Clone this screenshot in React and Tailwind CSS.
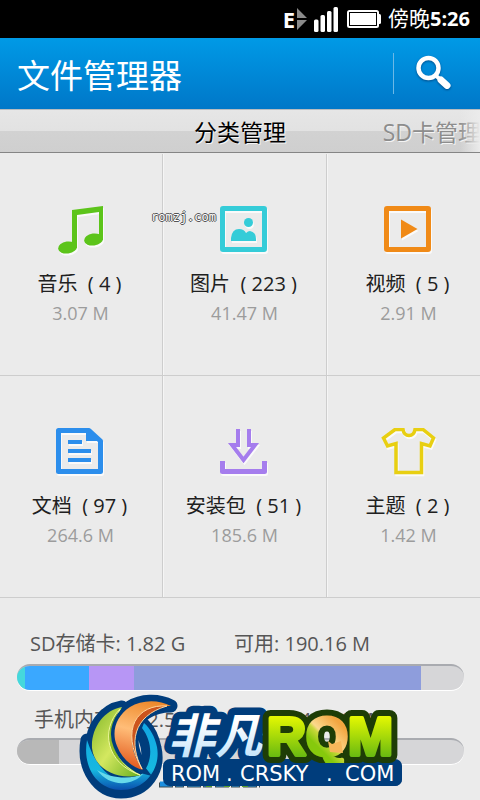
function MusicIcon() {
  return (
    <g fill="#5cc41a">
      <path d="M20 4 51 0V34H47V6L25 9V42H20Z" />
      <ellipse cx="15.5" cy="41.5" rx="9.5" ry="6" transform="rotate(-8 15.5 41.5)" />
      <ellipse cx="41.5" cy="33.5" rx="9.5" ry="6" transform="rotate(-8 41.5 33.5)" />
    </g>
  );
}

function PictureIcon() {
  return (
    <g fill="#35ccd8">
      <rect x="6.5" y="2.5" width="42" height="41" rx="0.5" fill="none" stroke="#35ccd8" strokeWidth="5" />
      <circle cx="32.5" cy="16.5" r="4.5" />
      <path d="M15 35v-3q1-9 8-9 5 0 7 4 2-2 4-2 6 1 6 8v2Z" />
    </g>
  );
}

function VideoIcon() {
  return (
    <g fill="#f08a17">
      <rect x="6.5" y="2.5" width="42" height="41" rx="0.5" fill="none" stroke="#f08a17" strokeWidth="5" />
      <path d="M21 13.5v19L37.5 23Z" />
    </g>
  );
}

function DocIcon() {
  return (
    <g fill="#2c8eec">
      <path d="M6.5 2.5H37L48.5 13V43.5H6.5Z" fill="none" stroke="#2c8eec" strokeWidth="5" strokeLinejoin="round" />
      <path d="M34 2V13H47V11Z" />
      <rect x="16" y="12" width="14" height="4" />
      <rect x="16" y="21" width="23" height="4" />
      <rect x="16" y="30" width="23" height="4" />
    </g>
  );
}

function PackageIcon() {
  return (
    <g fill="none" stroke="#a57ded">
      <path d="M6.5 33V43.5H48.5V33" strokeWidth="5" strokeLinejoin="round" />
      <path d="M33 1V17H39L27.5 32 16 17H22V1" strokeWidth="4" />
    </g>
  );
}

function ThemeIcon() {
  return (
    <path
      d="M15 1.5H23Q24 7.5 29 7.5T35 1.5H43L53.5 10 50 18 41.5 15.500V44.5H16V15.5L7.5 18 3.5 10Z"
      fill="none"
      stroke="#e8cf12"
      strokeWidth="3.5"
    />
  );
}

const categories = [
  { name: '音乐', count: 4, size: '3.07 M', Icon: MusicIcon },
  { name: '图片', count: 223, size: '41.47 M', Icon: PictureIcon },
  { name: '视频', count: 5, size: '2.91 M', Icon: VideoIcon },
  { name: '文档', count: 97, size: '264.6 M', Icon: DocIcon },
  { name: '安装包', count: 51, size: '185.6 M', Icon: PackageIcon },
  { name: '主题', count: 2, size: '1.42 M', Icon: ThemeIcon },
];

function StatusBar() {
  return (
    <div className="h-[38px] bg-black text-white flex items-center justify-end pr-[10px] text-[20px]">
      <span className="font-bold text-[22px] mr-0.5">E</span>
      <svg className="w-[10px] h-[22px] mr-[7px]" viewBox="0 0 10 22" fill="#8a8a8a">
        <path d="M0 0 10 10H0ZM0 12H10L0 22Z" />
      </svg>
      <svg className="w-[24px] h-[25px] mr-[9px]" viewBox="0 0 24 25" fill="#fff">
        <rect x="0" y="12.5" width="4.5" height="12.5" rx="1.5" />
        <rect x="6.5" y="8" width="4.5" height="17" rx="1.5" />
        <rect x="13" y="4" width="4.5" height="21" rx="1.5" />
        <rect x="19.5" y="0" width="4.5" height="25" rx="1.5" />
      </svg>
      <svg className="w-[34px] h-[18px] mr-[7px]" viewBox="0 0 34 18">
        <rect x="29" y="4" width="5" height="10" rx="1.5" fill="#fff" />
        <rect x="0" y="0" width="32" height="18" rx="2.5" fill="#fff" />
        <rect x="2.5" y="2.5" width="27" height="13" fill="#fff" stroke="#000" />
      </svg>
      <span className="text-[21px]">傍晚</span>
      <b>5:26</b>
    </div>
  );
}

function Header() {
  return (
    <header className="h-[71px] flex items-center pl-[17px] bg-linear-to-b from-[#009ae6] to-[#0077c8] text-white">
      <h1 className="flex-1 pt-1 text-[33px] leading-none">文件管理器</h1>
      <div className="w-px h-[41px] bg-[#6cb8e6]" />
      <button aria-label="搜索" className="w-[86px] h-full pl-[22px]">
        <svg className="w-[38px] h-[38px] drop-shadow-[0_1px_1px_rgba(0,40,90,0.6)]" viewBox="0 0 38 38" fill="none" stroke="#fff">
          <circle cx="12.5" cy="13" r="10" strokeWidth="4.5" />
          <path d="M19 20 25 25" strokeWidth="4" />
          <path d="M25 25 31 30.5" strokeWidth="7" strokeLinecap="round" />
        </svg>
      </button>
    </header>
  );
}

function Tabs() {
  return (
    <nav className="relative h-[44px] overflow-hidden border-t border-[#b8bcc0] border-b border-b-[#858585] bg-[linear-gradient(#e6e6e6_0,#e2e2e2_50%,#d2d2d2_50%,#cfcfcf_100%)] text-[23px] whitespace-nowrap">
      <div className="grid grid-cols-[1fr_92px_1fr] h-full items-center pt-0.5">
        <button className="col-start-2 text-black [text-shadow:1px_1px_0_#f4f4f4]">分类管理</button>
        <button className="justify-self-end -mr-px text-[#8d8d8d] [text-shadow:1px_1px_0_#f4f4f4]">SD卡管理</button>
      </div>
      <div className="absolute inset-y-0 right-0 w-5 bg-linear-to-r from-transparent to-[#ebebeb] pointer-events-none" />
    </nav>
  );
}

function Category({ item, children }) {
  const { name, count, size, Icon } = item;
  return (
    <button className="relative h-[222px] pt-[52px] pr-0.5 flex flex-col items-center border-b border-[#cdcdcd] border-l shadow-[inset_1px_0_0_#f5f5f5]">
      <svg className="w-[56px] h-[50px] drop-shadow-[1px_2px_0_#fafafa]" viewBox="0 0 56 50">
        <Icon />
      </svg>
      <span className="mt-[18px] h-[20px] overflow-hidden leading-[20px] text-[20px] text-[#202020] whitespace-pre">
        {`${name}  ( ${count} )`}
      </span>
      <span className="mt-[7px] pl-0.5 text-[18px] leading-[24px] text-[#9c9c9c]">{size}</span>
      {children}
    </button>
  );
}

function Storage({ total, free, label, parts, className }) {
  return (
    <section>
      <div className={`flex h-[36px] items-center text-[20px] text-[#565656] ${className}`}>
        <span className="w-[204px] whitespace-pre">{`${label}: ${total}`}</span>
        <span>{`可用: ${free}`}</span>
      </div>
      <div className="mt-[2px] h-[26px] flex rounded-full overflow-hidden bg-[#d6d6d8] border-t-2 border-[#a9abb0] shadow-[0_1px_0_#fff]">
        {parts.map(([color, width]) => (
          <div key={color} className="h-full" style={{ background: color, width }} />
        ))}
      </div>
    </section>
  );
}

function RomLogo() {
  return (
    <svg className="absolute left-[76px] top-[92px] w-[330px] h-[110px] pointer-events-none" viewBox="76 690 330 110">
      <defs>
        <linearGradient id="lime" x1="0" y1="0" x2="0" y2="1">
          <stop offset="0.1" stopColor="#f2ff00" />
          <stop offset="0.9" stopColor="#5fb512" />
        </linearGradient>
        <linearGradient id="turn" gradientUnits="userSpaceOnUse" x1="308" y1="752" x2="338" y2="722">
          <stop offset="0.25" stopColor="#86c90c" />
          <stop offset="0.48" stopColor="#c8d83a" />
          <stop offset="0.56" stopColor="#fbd98c" />
          <stop offset="1" stopColor="#f2a540" />
        </linearGradient>
        <linearGradient id="ice" x1="0" y1="0" x2="0" y2="1">
          <stop offset="0.35" stopColor="#ffffff" />
          <stop offset="0.9" stopColor="#bfe2fa" />
        </linearGradient>
        <linearGradient id="leaf" x1="0" y1="0" x2="1" y2="1">
          <stop offset="0" stopColor="#7fb526" />
          <stop offset="0.5" stopColor="#d4e860" />
          <stop offset="1" stopColor="#68ae1d" />
        </linearGradient>
        <linearGradient id="flame" x1="0.6" y1="0" x2="0.4" y2="1">
          <stop offset="0" stopColor="#ee8a2c" />
          <stop offset="0.45" stopColor="#ffbd78" />
          <stop offset="1" stopColor="#e2581c" />
        </linearGradient>
        <linearGradient id="ring" x1="0" y1="0" x2="0" y2="1">
          <stop offset="0" stopColor="#12a6e4" />
          <stop offset="0.7" stopColor="#16b8e0" />
          <stop offset="1" stopColor="#0a4fae" />
        </linearGradient>
      </defs>

      {/* colour edge peeking out under the banner */}
      <path d="M159 785H260" stroke="#3c4a50" strokeWidth="5" strokeDasharray="14 2 9 3" />
      <path d="M160 784H260" stroke="#1c8fe0" strokeWidth="5" strokeDasharray="12 4 7 5" />
      <path d="M206 785H258" stroke="#58a02c" strokeWidth="4" strokeDasharray="6 12" />

      {/* emblem */}
      <g stroke="#003d7c" strokeWidth="13" strokeLinejoin="round" fill="#003d7c">
        <path d="M87 740C82 768 98 792 121 792C146 792 160 770 155 748C153 738 149 730 144 725L139 730C151 744 150 764 141 773L98 770Z" />
        <path d="M122 707C104 710 91 728 92 748C94 766 115 781 141 776L122 748Z" />
        <path d="M171 706C158 699 141 700 130 707C116 716 111 732 117 746C122 759 132 767 143 770C134 758 130 744 133 730C137 716 151 706 171 706Z" />
      </g>
      <path d="M87 740C82 768 98 790 121 790C146 790 161 768 157 747C155 737 150 728 144 723L142 728C153 742 153 762 142 774C128 789 100 781 87 740Z" fill="url(#ring)" />
      <path d="M97 770C109 787 132 787 144 773C132 780 112 779 97 770Z" fill="#67d9ea" />
      <path d="M122 707C104 710 91 728 92 748C94 768 116 781 141 775C118 764 105 738 122 707Z" fill="url(#leaf)" />
      <path d="M120 709C100 730 106 763 140 775C116 765 106 738 120 709Z" fill="#8dbb26" stroke="#eef8a0" />
      <path d="M171 706C158 699 141 700 130 707C116 716 111 732 117 746C122 759 132 767 143 770C134 758 130 744 133 730C137 716 151 706 171 706Z" fill="url(#flame)" stroke="#003d7c" strokeWidth="7" paintOrder="stroke" />
      <path d="M167 706C138 704 119 728 142 769C129 744 132 716 167 706Z" fill="#cc541c" stroke="#ffd49c" />

      {/* wordmark */}
      <rect x="163" y="759" width="239" height="27" rx="7" fill="#003d7c" />
      <g fontFamily='"Noto Sans CJK SC", sans-serif' fontWeight="700" fontStyle="italic" fontSize="47" stroke="#003d7c" strokeWidth="15" strokeLinejoin="round">
        <text x="168" y="753" fill="url(#ice)" paintOrder="stroke">非凡</text>
      </g>
      <g fontFamily='"Liberation Sans", sans-serif' fontWeight="700" fontSize="54" strokeLinejoin="round">
        <text x="267" y="755" fill="#1e3d06" stroke="#1e3d06" strokeWidth="16">RQM</text>
        <text x="267" y="755" fill="url(#lime)" stroke="url(#lime)" strokeWidth="4">
          R<tspan fill="url(#turn)" stroke="url(#turn)">Q</tspan>M
        </text>
      </g>
      <path d="M328 741 332 744 341 741 343 753 330 752Z" fill="#f6b75a" />
      <rect x="165" y="763" width="237" height="23" rx="7" fill="#003d7c" />
      <text y="781" fontFamily='"DejaVu Sans", sans-serif' fontSize="21" fill="#fff">
        <tspan x="171">ROM</tspan>
        <tspan x="226">.</tspan>
        <tspan x="240">CRSKY</tspan>
        <tspan x="326">.</tspan>
        <tspan x="345">COM</tspan>
      </text>
    </svg>
  );
}

export default function App() {
  return (
    <div className="min-h-screen overflow-hidden bg-[#ebebeb] font-['Open_Sans','Noto_Sans_CJK_SC',sans-serif]">
      <StatusBar />
      <Header />
      <Tabs />
      <main>
        <div className="grid grid-cols-3 -ml-0.5 -mr-2.5 pt-px">
          {categories.map((item) => (
            <Category key={item.name} item={item}>
              {item.name === '图片' && (
                <span className="absolute -left-3 top-[55px] font-['DejaVu_Sans_Mono',monospace] text-[12px] leading-4 text-white [text-shadow:1px_0_0_#555,-1px_0_0_#555,0_1px_0_#555,0_-1px_0_#555]">
                  romzj.com
                </span>
              )}
            </Category>
          ))}
        </div>
        <div className="relative flex flex-col gap-[10px] px-4 pt-[28px] pb-[34px] pl-[17px]">
          <Storage
            className="pl-[13px]"
            label="SD存储卡"
            total="1.82 G"
            free="190.16 M"
            parts={[
              ['#45d8dc', '1.8%'],
              ['#3aa8ff', '14.3%'],
              ['#b796f5', '10.1%'],
              ['#8e9ddc', '64.2%'],
            ]}
          />
          <Storage
            className="pl-[17px] pt-1"
            label="手机内存"
            total="182.5 M"
            free="141.71 M"
            parts={[['#b8b8b8', '9.4%']]}
          />
          <RomLogo />
        </div>
      </main>
    </div>
  );
}
